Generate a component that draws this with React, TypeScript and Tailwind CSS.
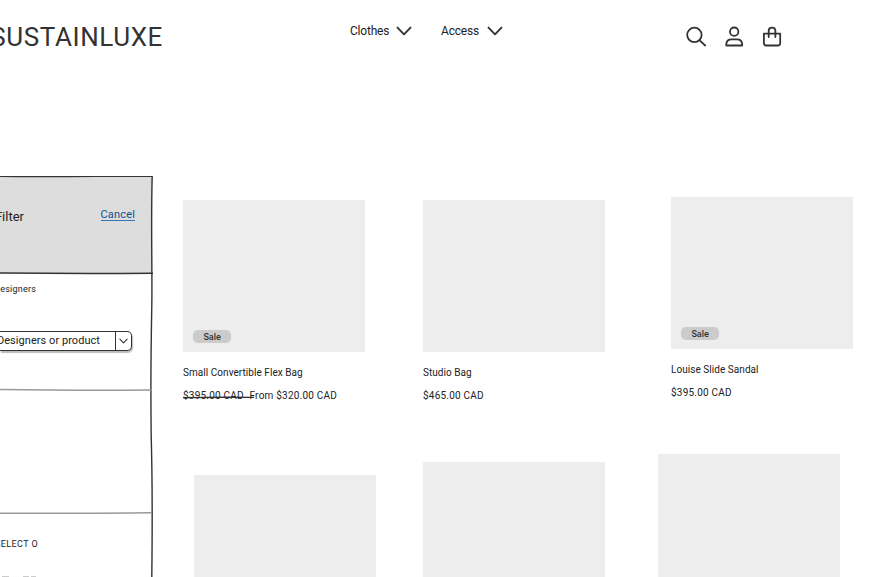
import React from "react";

function Chevron({ className }: { className: string }) {
  return (
    <svg className={className} viewBox="0 0 16 10" fill="none" stroke="#333" strokeWidth="1.9" strokeLinecap="round" strokeLinejoin="round">
      <path d="M1.5 1.6 L8 8.3 L14.5 1.6" />
    </svg>
  );
}

function Header() {
  return (
    <header className="flex h-[76px] w-full shrink-0">
      <div className="flex w-[163px] shrink-0 justify-end pt-[21px] text-[26px] leading-8 tracking-[0.6px] text-[#333]">SUSTAINLUXE</div>
      <nav className="flex w-[523px] shrink-0 pl-[187px] pt-[22px] text-[12px] leading-[18px] tracking-[-0.2px]">
        <div className="flex w-[91px]">
          <span className="w-[45.5px]">Clothes</span>
          <Chevron className="mt-1 h-[10px] w-4" />
        </div>
        <div className="flex">
          <span className="w-[46px]">Access</span>
          <Chevron className="mt-1 h-[10px] w-4" />
        </div>
      </nav>
      <div className="flex gap-[16px] pt-[26px]">
        <svg className="h-[22px] w-[22px]" viewBox="0 0 22 22" fill="none" stroke="#333" strokeWidth="1.8" strokeLinecap="round">
          <circle cx="8.4" cy="8.9" r="7.2" />
          <path d="M13.6 14.3 L19.2 19.5" />
        </svg>
        <svg className="h-[22px] w-[22px]" viewBox="0 0 22 22" fill="none" stroke="#333" strokeWidth="1.8" strokeLinejoin="round">
          <circle cx="10.2" cy="5.7" r="4.2" />
          <path d="M2.3 19.5 V18 C2.6 14.8 5 13.4 7.5 13.4 H13 C15.8 13.4 17.9 15 18.2 18 V19.5 Z" />
        </svg>
        <svg className="h-[22px] w-[22px]" viewBox="0 0 22 22" fill="none" stroke="#333" strokeWidth="1.8" strokeLinecap="round" strokeLinejoin="round">
          <path d="M1.9 7.6 H18.2 V17 Q18.2 19.5 15.8 19.5 H4.3 Q1.9 19.5 1.9 17 Z" />
          <path d="M6.7 11 V5 Q6.7 1.6 10 1.6 Q13.4 1.6 13.4 5 V11" />
        </svg>
      </div>
    </header>
  );
}

function Sidebar() {
  return (
    <aside className="relative mt-[100px] flex h-[401px] w-[153px] shrink-0 flex-col overflow-hidden">
      <div className="flex h-[97px] w-[152px] shrink-0 bg-[#ddd]">
        <div className="flex w-[24px] shrink-0 justify-end pt-[31px] text-[13px] leading-5">Filter</div>
        <a className="ml-[76.5px] mt-[31px] h-[14px] border-b border-[#3477b5] text-[11px] leading-[15px] tracking-[0.2px] text-[#0b5394]">Cancel</a>
      </div>
      <div className="flex h-[58px] w-[36px] shrink-0 justify-end pt-[9px] text-[9px] leading-[14px] tracking-[0.2px]">Designers</div>
      <div className="flex h-[20px] w-[132px] shrink-0 rounded-r-[5px] border-y-[1.5px] border-r-[1.5px] border-[#333] bg-white text-[11px] leading-[17px] shadow-[1px_2px_1px_#bbb]">
        <div className="flex w-[115px] shrink-0 justify-end whitespace-nowrap pr-[15px] tracking-[0.05px]">Designers or product</div>
        <div className="flex flex-1 items-center justify-center border-l-[1.5px] border-[#333]">
          <Chevron className="h-[6px] w-[9px]" />
        </div>
      </div>
      <div className="mt-[186px] flex h-[39px] w-[38px] shrink-0 justify-end whitespace-nowrap text-[9px] leading-[14px] tracking-[0.4px]">SELECT O</div>
      <div className="flex h-px w-[38px] shrink-0 gap-[2px] pl-[2px]">
        <span className="w-[7px] bg-[#ccc]" />
        <span className="ml-[12px] w-[6px] bg-[#ccc]" />
        <span className="w-[5px] bg-[#ccc]" />
      </div>
      <svg className="absolute inset-0 h-[401px] w-[153px]" fill="none" stroke="#333" strokeWidth="1.4">
        <path d="M0 .4 C50 1 100 .2 152.2 .2 C150.8 50 152.4 90 151.8 130 C151 170 150.8 230 151.2 260 C152.6 310 152.4 350 151.8 401" />
        <path d="M0 97 Q80 97.8 153 97.2" />
        <path d="M0 213.5 Q80 214.6 151 214" stroke="#999" />
        <path d="M0 337.2 Q100 337.5 151 336.8" stroke="#999" />
      </svg>
    </aside>
  );
}

type CardProps = { name?: string; price?: string; old?: string; sale?: boolean };

function Card({ name, price, old, sale }: CardProps) {
  return (
    <article className="w-[183px] shrink-0 text-[10px] leading-[14px]">
      <div className="flex h-[152px] w-[182.4px] items-end bg-[#ededed] pb-[9px] pl-[10.4px]">
        {sale && <span className="flex h-[13px] w-[37.5px] items-center justify-center rounded-[5px] bg-[#cbcbcb] text-[9px] font-medium text-[#333]">Sale</span>}
      </div>
      <h2 className="mt-[14px] whitespace-nowrap tracking-[0.05px]">{name}</h2>
      <p className="mt-[9px] flex whitespace-nowrap tracking-[0.22px]">
        {old && (
          <span className="relative w-[66.5px]">
            {old}
            <svg className="absolute left-0 top-[6px] h-[4px] w-[71px]" fill="none" stroke="#333" strokeWidth="1.3">
              <path d="M0 2.6 Q35 2 71 2.4" />
            </svg>
          </span>
        )}
        {price}
      </p>
    </article>
  );
}

export default function App() {
  return (
    <div className="flex h-[577px] w-[883px] flex-col overflow-hidden bg-white font-['Roboto',sans-serif] text-[#222]">
      <Header />
      <div className="flex min-h-0 flex-1">
        <Sidebar />
        <main className="flex w-[730px] shrink-0 flex-col">
          <section className="flex h-[378px] shrink-0 pl-[30px]">
            <div className="mr-[57px] mt-[124.4px]"><Card name="Small Convertible Flex Bag" old="$395.00 CAD" price="From $320.00 CAD" sale /></div>
            <div className="mr-[65px] mt-[124.4px]"><Card name="Studio Bag" price="$465.00 CAD" /></div>
            <div className="mt-[121.4px]"><Card name="Louise Slide Sandal" price="$395.00 CAD" sale /></div>
          </section>
          <section className="flex min-h-0 flex-1 pl-[41px]">
            <div className="mr-[46px] mt-[21px]"><Card /></div>
            <div className="mr-[52px] mt-[8px]"><Card /></div>
            <div><Card /></div>
          </section>
        </main>
      </div>
    </div>
  );
}
